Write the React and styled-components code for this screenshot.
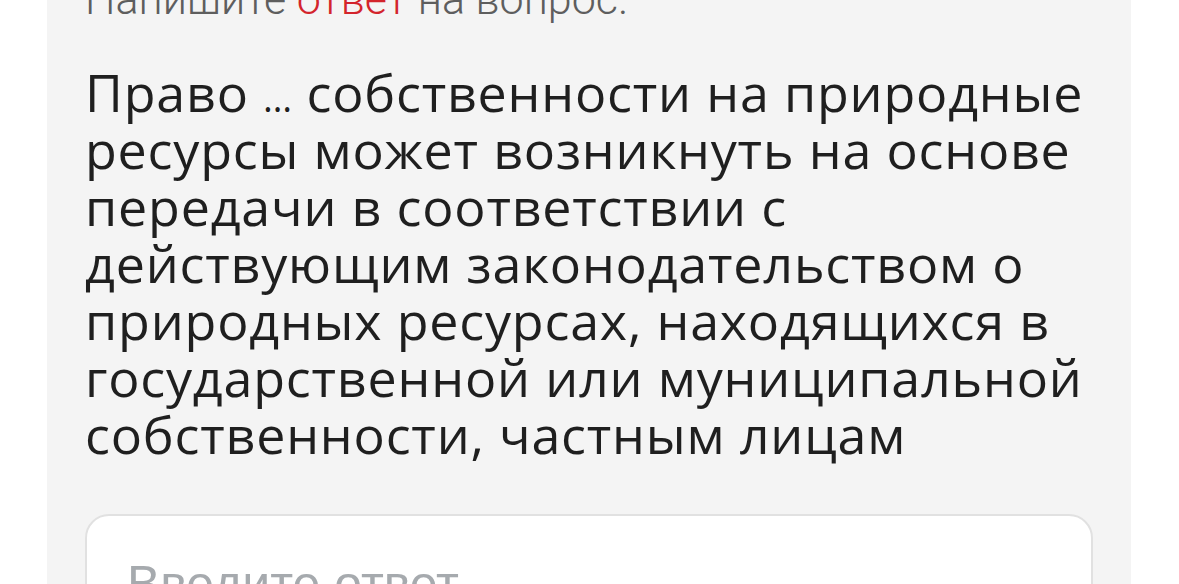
import React from "react";
import styled, { createGlobalStyle } from "styled-components";

const GlobalStyle = createGlobalStyle`
  html, body {
    margin: 0;
    padding: 0;
    background: #ffffff;
  }
  body {
    font-family: "Open Sans", "Noto Sans", sans-serif;
    overflow: hidden;
  }
`;

const Viewport = styled.div`
  height: 584px;
  overflow: hidden;
`;

const QuestionCard = styled.section`
  box-sizing: border-box;
  width: 1084px;
  margin: -57px 0 0 47px;
  padding: 30px 38px 80px;
  background: #f4f4f4;
`;

const Prompt = styled.p`
  margin: 0;
  font-family: Roboto, "Liberation Sans", sans-serif;
  font-weight: 300;
  font-size: 43px;
  line-height: 52px;
  color: #5e5e5e;
  white-space: nowrap;
`;

const Accent = styled.span`
  color: #d3242c;
`;

const QuestionText = styled.h2`
  margin: 38px 0 0;
  font-family: "Open Sans", "Noto Sans", sans-serif;
  font-weight: 400;
  font-size: 52px;
  line-height: 57px;
  letter-spacing: 0.8px;
  color: #1f1f1f;
`;

/* the gap in the statement is shown as a small, tight ellipsis */
const Gap = styled.span`
  font-size: 0.72em;
  line-height: 0;
  letter-spacing: 0;
`;

const AnswerField = styled.input`
  display: block;
  box-sizing: border-box;
  width: 100%;
  margin-top: 52px;
  padding: 39px 40px 30px;
  border: 2px solid #e1e1e1;
  border-radius: 24px;
  background: #ffffff;
  font-family: "Liberation Sans", Arial, sans-serif;
  font-size: 50px;
  line-height: 58px;
  color: #1f1f1f;
  outline: none;

  &::placeholder {
    color: #a6aaae;
  }
`;

export default function App() {
  return (
    <>
      <GlobalStyle />
      <Viewport>
        <QuestionCard>
          <Prompt>
            Напишите <Accent>ответ</Accent> на вопрос.
          </Prompt>
          <QuestionText>
            Право <Gap>…</Gap> собственности на природные ресурсы может
            возникнуть на основе передачи в соответствии с действующим
            законодательством о природных ресурсах, находящихся в
            государственной или муниципальной собственности, частным лицам
          </QuestionText>
          <AnswerField type="text" placeholder="Введите ответ" />
        </QuestionCard>
      </Viewport>
    </>
  );
}
